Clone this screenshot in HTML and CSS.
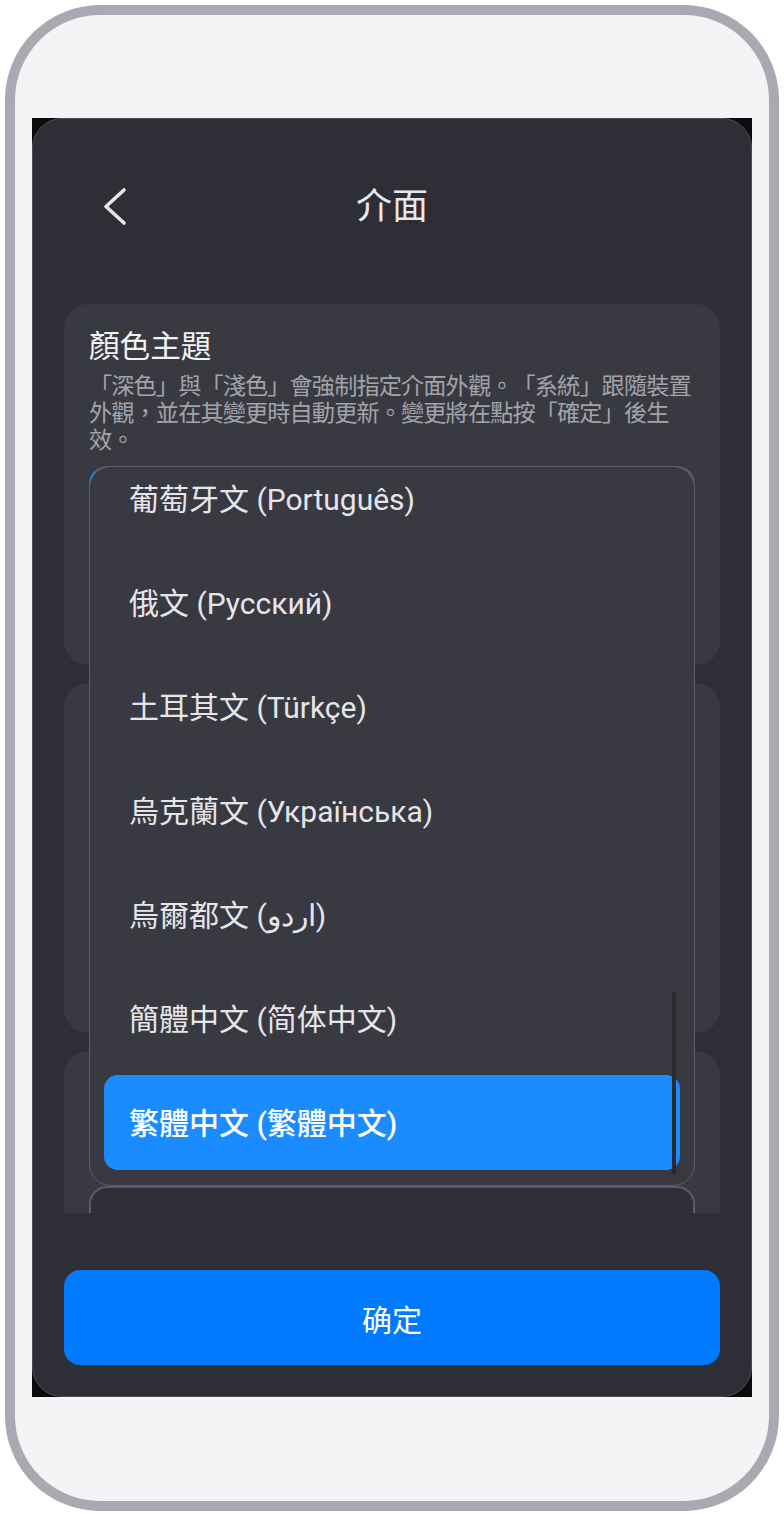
FILE: index.html
```html
<!DOCTYPE html>
<html lang="zh-Hant">

<head>
    <meta charset="UTF-8">
    <meta name="viewport" content="width=device-width, initial-scale=1.0">
    <title>介面</title>
    <link rel="stylesheet" href="styles.css">
</head>

<body>
    <div class="phone">
        <div class="screen">
            <div class="panel">
                <div class="header">
                    <button class="back-btn" aria-label="返回">
                        <svg width="30" height="40" viewBox="0 0 30 40">
                            <path d="M24 3 L6 19.5 L24 36" fill="none" stroke="#e6e6ea" stroke-width="3.6"
                                stroke-linecap="round" stroke-linejoin="round" />
                        </svg>
                    </button>
                    <h1>介面</h1>
                    <div></div>
                </div>

                <div class="scroll">
                    <!-- 顏色主題 -->
                    <div class="card card-theme">
                        <h2>顏色主題</h2>
                        <p class="desc">「深色」與「淺色」會強制指定介面外觀。「系統」跟隨裝置外觀，並在其變更時自動更新。變更將在點按「確定」後生效。</p>
                        <div class="select-wrap">
                            <div class="select is-focused"></div>

                            <!-- 展開的語言清單 -->
                            <div class="dropdown">
                                <div class="options">
                                    <div class="option">葡萄牙文 (Português)</div>
                                    <div class="option">俄文 (Русский)</div>
                                    <div class="option">土耳其文 (Türkçe)</div>
                                    <div class="option">烏克蘭文 (Українська)</div>
                                    <div class="option">烏爾都文 (اردو)</div>
                                    <div class="option">簡體中文 (简体中文)</div>
                                    <div class="option selected">繁體中文 (繁體中文)</div>
                                </div>
                                <div class="scroll-thumb"></div>
                            </div>
                        </div>
                        <div class="preview-row"></div>
                    </div>

                    <!-- 語言 (被清單蓋住) -->
                    <div class="card card-language"></div>

                    <!-- 字體大小 (被清單蓋住) -->
                    <div class="card card-font">
                        <div class="select"></div>
                    </div>
                </div>

                <div class="footer">
                    <button class="btn-confirm">确定</button>
                </div>
            </div>
        </div>
    </div>
</body>

</html>
```

FILE: styles.css
```css
* {
    margin: 0;
    padding: 0;
    box-sizing: border-box;
}

body {
    font-family: 'Roboto', 'Noto Sans CJK TC', sans-serif;
    background: #ffffff;
}

.phone {
    width: 774px;
    height: 1506px;
    margin: 5px;
    border: 10px solid #a9a9b1;
    border-radius: 95px;
    background: #f4f4f6;
    padding: 103px 17px 0;
}

.screen {
    width: 720px;
    height: 1279px;
    background: #0c0c0e;
}

.panel {
    height: 100%;
    background: #2e2e36;
    border: 1px solid #4e4e58;
    border-radius: 30px;
    display: flex;
    flex-direction: column;
    overflow: hidden;
}

.header {
    flex: none;
    height: 176px;
    display: grid;
    grid-template-columns: 1fr auto 1fr;
    align-items: center;
}

.back-btn {
    justify-self: start;
    margin-left: 67px;
    background: none;
    border: none;
    display: flex;
}

.header h1 {
    font-size: 36px;
    font-weight: 400;
    line-height: 44px;
    color: #e8e8ec;
}

.scroll {
    flex: 1;
    overflow: hidden;
    padding: 9px 31px 0;
    display: flex;
    flex-direction: column;
    gap: 18px;
}

.card {
    flex-shrink: 0;
    background: #393941;
    border-radius: 24px;
    padding: 24px 25px;
}

.card-theme {
    position: relative;
}

.card-language {
    height: 350px;
}

.card-font {
    padding-top: 135px;
}

.card h2 {
    font-size: 30.6px;
    font-weight: 400;
    line-height: 38px;
    color: #f2f2f4;
}

.desc {
    margin-top: 7px;
    font-size: 23.2px;
    line-height: 27px;
    letter-spacing: -0.9px;
    color: #a3a3ab;
    text-spacing-trim: space-all;
}

.select-wrap {
    position: relative;
    margin-top: 12px;
}

.select {
    height: 96px;
    border: 2px solid #5b5b65;
    border-radius: 18px;
    background: #2e2e36;
}

.select.is-focused {
    border-left-color: #0a84ff;
}

.preview-row {
    margin-top: 18px;
    height: 61px;
}

.dropdown {
    position: absolute;
    top: 0;
    left: 0;
    right: 0;
    height: 720px;
    z-index: 2;
    background: #393941;
    border: 1px solid #5d5d67;
    border-radius: 22px;
    overflow: hidden;
}

.options {
    height: 100%;
    padding: 14px 14px 15px;
    display: flex;
    flex-direction: column;
    justify-content: flex-end;
    gap: 9px;
    overflow: hidden;
}

.option {
    flex: none;
    height: 95px;
    padding: 0 25px 3px;
    border-radius: 14px;
    display: flex;
    align-items: center;
    font-size: 30px;
    color: #e6e6ea;
    white-space: nowrap;
}

.option.selected {
    background: #1a8cff;
    color: #ffffff;
    font-weight: 500;
}

.scroll-thumb {
    position: absolute;
    right: 18px;
    top: 525px;
    width: 4px;
    height: 183px;
    background: #2a2a31;
}

.footer {
    flex: none;
    padding: 57px 31px 31px;
}

.btn-confirm {
    width: 100%;
    height: 95px;
    border: none;
    border-radius: 16px;
    background: #007aff;
    color: #ffffff;
    font-family: inherit;
    font-size: 30px;
}
```
